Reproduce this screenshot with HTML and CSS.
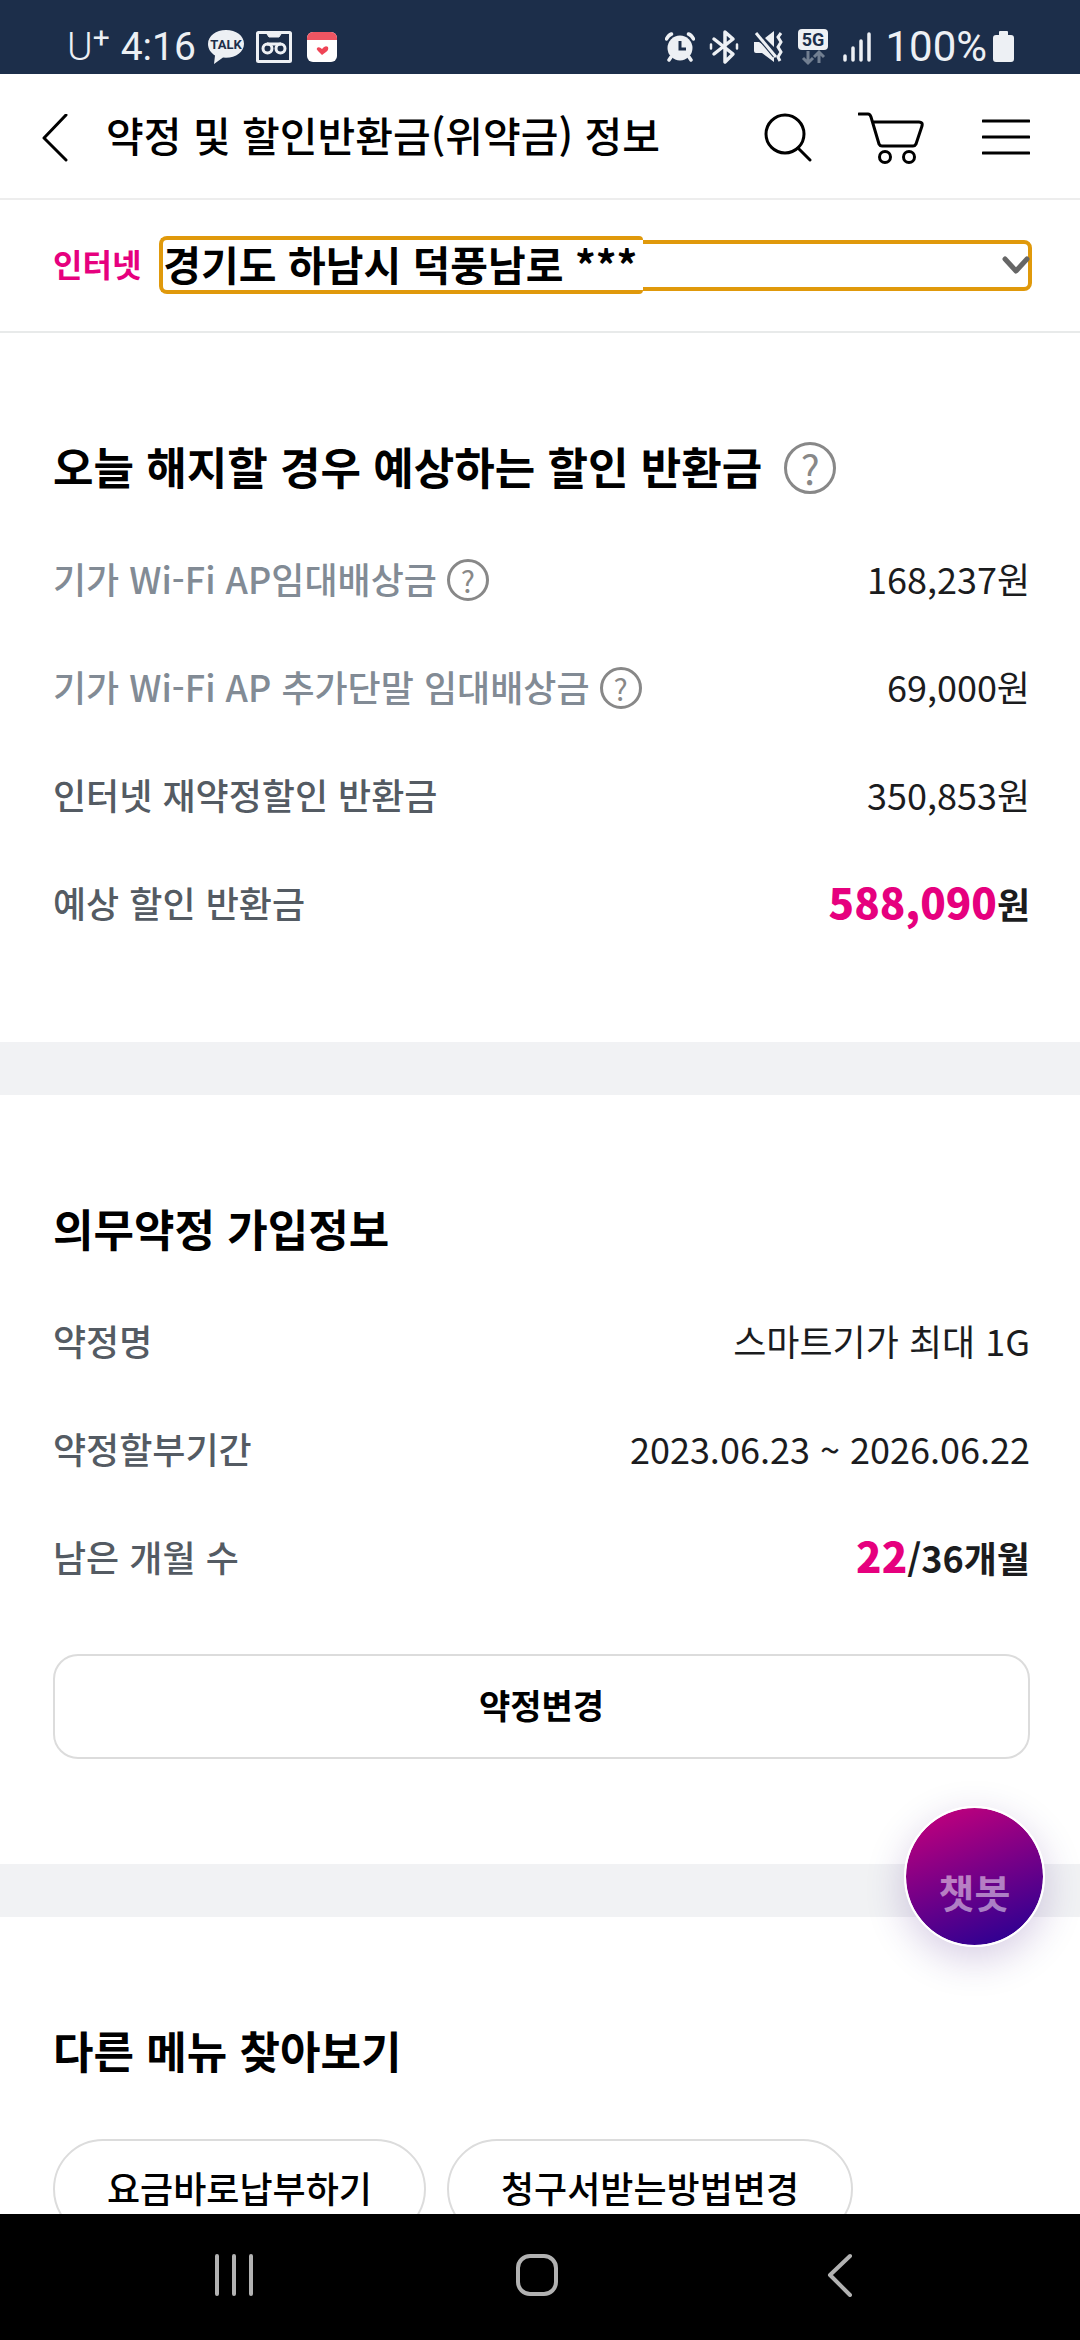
FILE: index.html
```html
<!DOCTYPE html>
<html lang="ko">
<head>
<meta charset="utf-8">
<meta name="viewport" content="width=device-width, initial-scale=1">
<title>약정 및 할인반환금(위약금) 정보</title>
<link rel="stylesheet" href="styles.css">
</head>
<body>
<div class="status">
  <div class="status-left">
    <span class="carrier">U<sup>+</sup></span>
    <span class="clock">4:16</span>
    <svg class="talk" width="38" height="36" viewBox="0 0 38 36"><path d="M19 1C9 1 1 7 1 15c0 5 3 9 7 11.500L7 35l9-6.500 3 .2c10 0 18-6 18-14S29 1 19 1z" fill="#edf0f4"/><text x="19" y="20" text-anchor="middle">TALK</text></svg>
    <svg width="36" height="36" viewBox="0 0 36 36" fill="none" stroke="#edf0f4" stroke-width="3"><rect x="1.500" y="3.500" width="33" height="29" rx="1"/><path d="M11 5h14l-2 3H13z" fill="#edf0f4" stroke-width="1"/><circle cx="11.500" cy="19.500" r="4.500"/><circle cx="24.500" cy="19.500" r="4.500"/><path d="M11 15h14"/></svg>
    <svg width="40" height="36" viewBox="0 0 40 36"><rect x="4" y="3" width="30" height="30" rx="6" fill="#fff"/><path d="M4 11V9a6 6 0 0 1 6-6h18a6 6 0 0 1 6 6v2z" fill="#ef5562"/><path d="M14 19q2-2 5 1 3-4 6-2 1 3-2 5l-4 3-4-4q-2-2-1-3z" fill="#ef4456"/></svg>
  </div>
  <div class="status-right">
    <svg width="30" height="36" viewBox="0 0 30 36" fill="none" stroke="#edf0f4" stroke-width="3.500" stroke-linecap="round"><circle cx="15" cy="19" r="12.500" fill="#edf0f4" stroke="none"/><path d="M1.500 10q2-4 5-5M28.500 10q-2-4-5-5M6 28l-2 3M24 28l2 3"/><path d="M15 12v8h6" stroke="#1c2e4a" stroke-width="3" stroke-linecap="butt"/></svg>
    <svg width="30" height="36" viewBox="0 0 30 36" fill="none" stroke="#edf0f4" stroke-width="3.500" stroke-linejoin="round" stroke-linecap="round"><path d="M5 10l19 15-8 8V3l8 7L5 25"/><path d="M2 15.500v4M28 15.500v4" stroke-width="2.500"/></svg>
    <svg width="30" height="36" viewBox="0 0 30 36"><path d="M1 13h5l15 10v10L9 24H3q-2 0-2-2zM12 9l9-7v16z" fill="#edf0f4"/><path d="M2 3l20 24" stroke="#1c2e4a" stroke-width="5"/><path d="M3 4l20 24" stroke="#edf0f4" stroke-width="3"/><path d="M28 4l-3 4 3 5-3 5 3 5-3 5 2 4" fill="none" stroke="#edf0f4" stroke-width="3"/></svg>
    <svg class="net" width="32" height="40" viewBox="0 0 32 40"><rect x="1" y="2" width="30" height="21" rx="4" fill="#edf0f4"/><text x="16" y="19" text-anchor="middle">5G</text><path d="M11 24v12M6 31l5 5 5-5M22 36V25M17 30l5-5 5 5" fill="none" stroke="#727f91" stroke-width="3"/></svg>
    <svg width="28" height="36" viewBox="0 0 28 36" stroke="#edf0f4" stroke-width="3.500" stroke-linecap="round"><path d="M2 27v4M10 19v12M18 12v19M26 5v26"/></svg>
    <span class="battery"><span>100%</span><svg width="21" height="36" viewBox="0 0 21 36"><path d="M6 3q0-1 1-1h7q1 0 1 1v3h3q3 0 3 3v21q0 3-3 3H3q-3 0-3-3V9q0-3 3-3h3z" fill="#edf0f4"/></svg></span>
  </div>
</div>

<header class="header">
  <button class="icon-btn" aria-label="뒤로"><svg width="26" height="48" viewBox="0 0 26 48"><path d="M24 1L2 24l22 22"/></svg></button>
  <h1>약정 및 할인반환금(위약금) 정보</h1>
  <nav class="tools">
    <button class="icon-btn" aria-label="검색"><svg width="48" height="52" viewBox="0 0 48 52"><circle cx="21" cy="22" r="19"/><path d="M34 36l12 12"/></svg></button>
    <button class="icon-btn" aria-label="장바구니"><svg width="66" height="52" viewBox="0 0 66 52"><path d="M1 2h9q2 0 3 3l8 27q1 2 3 2h31q2 0 3-2l6-18q1-4-3-4H15"/><circle cx="27" cy="45" r="5.500"/><circle cx="51" cy="45" r="5.500"/></svg></button>
    <button class="icon-btn" aria-label="메뉴"><svg width="48" height="52" viewBox="0 0 48 52"><path d="M1 9h46M1 25h46M1 41h46"/></svg></button>
  </nav>
</header>

<main class="main">
  <div class="account">
    <label for="addr">인터넷</label>
    <div class="picker">
      <span class="ring"></span>
      <select id="addr"><option>경기도 하남시 덕풍남로 ***</option></select>
      <svg class="chevron" width="28" height="20" viewBox="0 0 28 20"><path d="M3 3l11 12L25 3"/></svg>
    </div>
  </div>

  <section class="section">
    <h2>오늘 해지할 경우 예상하는 할인 반환금<button class="help help-lg" aria-label="도움말">?</button></h2>
    <dl class="rows">
      <div><dt class="muted">기가 Wi-Fi AP임대배상금<button class="help" aria-label="도움말">?</button></dt><dd>168,237원</dd></div>
      <div><dt class="muted">기가 Wi-Fi AP 추가단말 임대배상금<button class="help" aria-label="도움말">?</button></dt><dd>69,000원</dd></div>
      <div><dt>인터넷 재약정할인 반환금</dt><dd>350,853원</dd></div>
      <div><dt>예상 할인 반환금</dt><dd class="total"><strong>588,090</strong>원</dd></div>
    </dl>
  </section>

  <section class="section">
    <h2>의무약정 가입정보</h2>
    <dl class="rows">
      <div><dt>약정명</dt><dd>스마트기가 최대 1G</dd></div>
      <div><dt>약정할부기간</dt><dd>2023.06.23 ~ 2026.06.22</dd></div>
      <div><dt>남은 개월 수</dt><dd class="total"><strong>22</strong>/36개월</dd></div>
    </dl>
    <button class="change">약정변경</button>
  </section>

  <section class="section">
    <h2>다른 메뉴 찾아보기</h2>
    <div class="chips">
      <a href="#pay">요금바로납부하기</a>
      <a href="#bill">청구서받는방법변경</a>
    </div>
  </section>

  <button class="chatbot">챗봇</button>
</main>

<nav class="softkeys">
  <button class="icon-btn" aria-label="최근 앱"><svg width="44" height="44" viewBox="0 0 44 44"><path d="M5 3v38M22 3v38M39 3v38"/></svg></button>
  <button class="icon-btn" aria-label="홈"><svg width="44" height="44" viewBox="0 0 44 44"><rect x="3" y="3" width="38" height="38" rx="12"/></svg></button>
  <button class="icon-btn" aria-label="이전"><svg width="44" height="44" viewBox="0 0 44 44"><path d="M32 3L12 22l20 20"/></svg></button>
</nav>
</body>
</html>
```
FILE: styles.css
```css
* { box-sizing: border-box; }

body {
  margin: 0;
  height: 100vh;
  display: flex;
  flex-direction: column;
  overflow: hidden;
  background: #fff;
  color: #000;
  font-family: "Noto Sans CJK KR", sans-serif;
}

button, select { font: inherit; color: inherit; border: 0; background: none; padding: 0; margin: 0; }
svg { display: block; flex: none; }
h1, h2, dl, dd { margin: 0; }

/* Status bar */
.status {
  flex: none;
  height: 74px;
  padding: 20px 66px 0 67px;
  display: flex;
  align-items: center;
  justify-content: space-between;
  background: #1c2e4a;
  color: #edf0f4;
  font: 400 39px/54px Roboto, sans-serif;
}
.status-left { display: flex; align-items: center; gap: 11px; }
.status-right { display: flex; align-items: center; gap: 14px; }
.battery { display: flex; align-items: center; gap: 6px; font-size: 42px; }
.carrier { font-weight: 300; }
.carrier sup { font-size: 30px; line-height: 1px; vertical-align: 12px; font-weight: 400; }
.talk text { font: 700 13px Roboto, sans-serif; fill: #1c2e4a; }
.net text { font: 700 18px Roboto, sans-serif; fill: #1c2e4a; }

/* Page header */
.header {
  flex: none;
  height: 126px;
  padding: 4px 50px 0 42px;
  display: flex;
  align-items: center;
  border-bottom: 2px solid #ededed;
}
.header h1 { flex: 1; margin-left: 38px; padding-bottom: 8px; font-size: 41px; line-height: 60px; font-weight: 500; }
.header svg { fill: none; stroke: #000; stroke-width: 3; stroke-linecap: round; stroke-linejoin: round; }
.tools { display: flex; gap: 58px; }
.tools .icon-btn:first-child { margin-right: -12px; }

/* Account selector */
.main { position: relative; flex: 1; min-height: 0; overflow: hidden; }
.account {
  height: 133px;
  padding: 0 48px 0 53px;
  display: flex;
  align-items: center;
  gap: 18px;
  border-bottom: 2px solid #e8eaea;
}
.account label { padding-bottom: 6px; color: #e6007e; font-size: 32px; line-height: 48px; font-weight: 700; }
.picker {
  position: relative;
  flex: 1;
  height: 51px;
  display: flex;
  align-items: center;
  border: 4px solid #e0990b;
  border-radius: 8px;
}
.ring {
  position: absolute;
  top: -8px;
  bottom: -7px;
  left: -4px;
  width: 484px;
  border: 4px solid #e0990b;
  border-right: 0;
  border-radius: 8px 4px 4px 8px;
  background: #fff;
}
.picker select {
  position: relative;
  width: 100%;
  height: 66px;
  padding-bottom: 6px;
  appearance: none;
  outline: 0;
  font-size: 41px;
  line-height: 60px;
  font-weight: 700;
}
.chevron { position: absolute; right: -2px; fill: none; stroke: #666; stroke-width: 5; stroke-linecap: round; stroke-linejoin: round; }

/* Content sections */
.section { padding: 103px 50px 84px 53px; }
.section + .section { border-top: 53px solid #f1f2f4; }
.section h2 {
  display: flex;
  align-items: center;
  gap: 22px;
  padding-bottom: 4px;
  font-size: 44px;
  line-height: 60px;
  font-weight: 700;
}
.rows { margin-top: 26px; }
.rows > div { height: 108px; padding-bottom: 4px; display: flex; align-items: center; justify-content: space-between; }
.rows dt {
  display: flex;
  align-items: center;
  gap: 10px;
  color: #545b63;
  font-size: 36px;
  line-height: 54px;
  font-weight: 500;
}
.rows dt.muted { color: #828b95; }
.rows dd { color: #1b1c1e; font-size: 36px; line-height: 54px; font-weight: 400; }
.rows dd.total { font-weight: 700; }
.rows strong { color: #e6007e; font-size: 42px; }
.help {
  width: 42px;
  height: 42px;
  margin-top: 4px;
  border: 3px solid #888;
  border-radius: 50%;
  color: #888;
  font-size: 30px;
  line-height: 34px;
  font-weight: 400;
}
.help-lg { width: 52px; height: 52px; font-size: 40px; line-height: 44px; }
.change {
  display: block;
  width: 100%;
  height: 105px;
  margin: 42px 0 21px;
  padding-bottom: 4px;
  border: 2px solid #dcdcdc;
  border-radius: 25px;
  font-size: 34px;
  font-weight: 700;
}
.chips { display: flex; flex-wrap: wrap; gap: 21px; margin-top: 55px; }
.chips a {
  padding: 0 52px 4px;
  border: 2px solid #dcdcdc;
  border-radius: 50px;
  color: #000;
  font-size: 36px;
  line-height: 92px;
  font-weight: 500;
  text-decoration: none;
}

/* Floating chatbot button */
.chatbot {
  position: absolute;
  right: 35px;
  bottom: 267px;
  width: 141px;
  height: 141px;
  padding-top: 28px;
  border: 2px solid #fff;
  border-radius: 50%;
  background: linear-gradient(160deg, #b8007e 12%, #320091 88%) border-box;
  background-clip: padding-box;
  box-shadow: 0 12px 40px rgba(51, 0, 120, 0.2);
  color: rgba(255, 255, 255, 0.5);
  font-size: 39px;
  font-weight: 700;
}

/* System navigation */
.softkeys {
  flex: none;
  height: 126px;
  padding: 0 88px 4px 82px;
  display: grid;
  grid-template-columns: repeat(3, 1fr);
  justify-items: center;
  align-items: center;
  background: #000;
}
.softkeys svg { fill: none; stroke: #b2b2b2; stroke-width: 4; stroke-linecap: round; stroke-linejoin: round; }
```
